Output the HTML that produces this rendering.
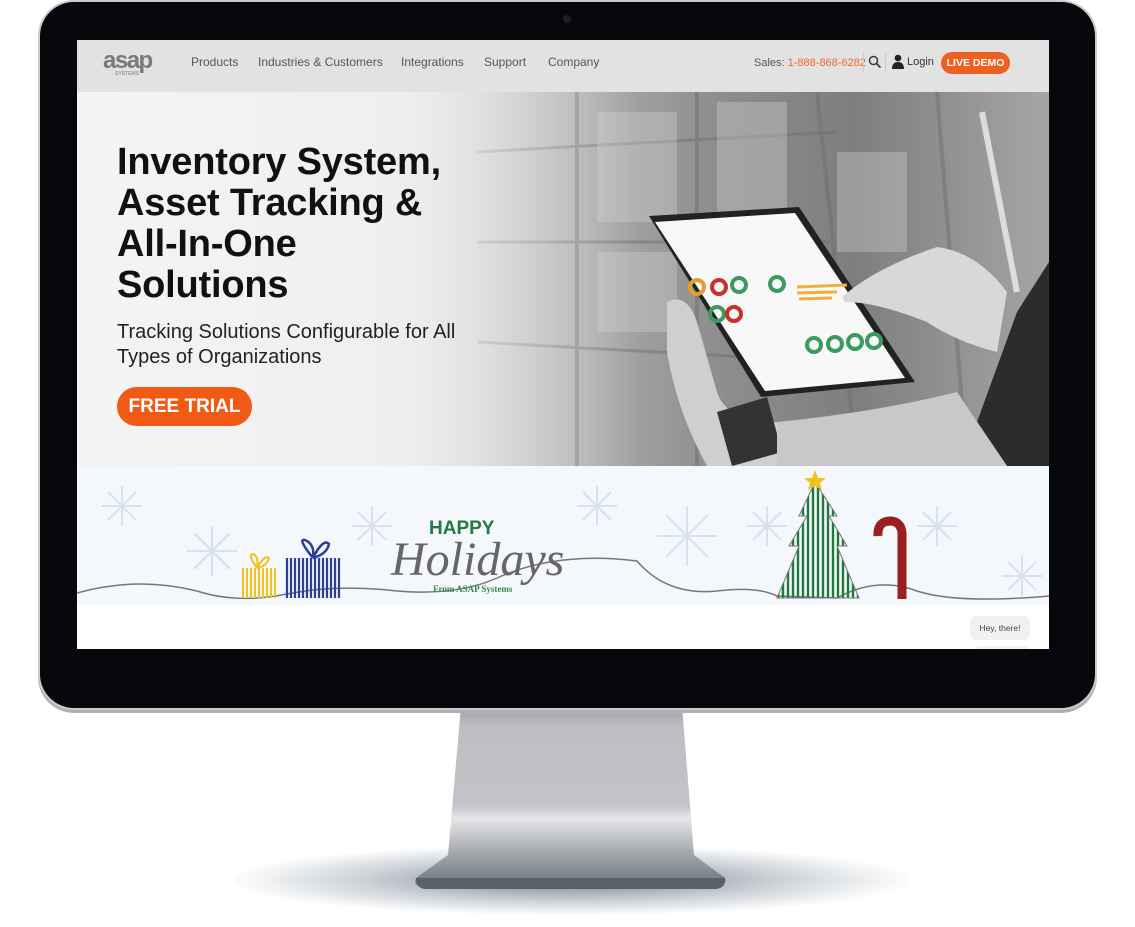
<!DOCTYPE html>
<html><head><meta charset="utf-8"><style>
*{margin:0;padding:0;box-sizing:border-box}
html,body{width:1135px;height:927px;overflow:hidden}
body{background:#fff;position:relative;font-family:"Liberation Sans",sans-serif}
.abs{position:absolute}
.bezel{left:40px;top:2px;width:1055px;height:706px;background:#07080b;border-radius:34px;box-shadow:0 0 0 2px #c9cbce,0 3px 0 2px #aeb0b3}
.screen{left:77px;top:40px;width:972px;height:609px;background:#fff;overflow:hidden}
.nav{left:0;top:0;width:972px;height:52px;background:#e2e2e2}
.nav a{position:absolute;top:15px;font-size:12px;color:#555}
.hero{left:0;top:52px;width:972px;height:374px;background:linear-gradient(90deg,#f3f3f3 0%,#e8e8e8 30%,#bdbdbd 45%,#8f8f8f 65%,#7e7e7e 80%,#a5a5a5 100%);overflow:hidden}
h1{position:absolute;left:40px;top:50px;font-size:38px;line-height:41px;font-weight:bold;color:#111;letter-spacing:-0.2px}
.sub{position:absolute;left:40px;top:228px;font-size:20px;line-height:25px;color:#222}
.ft{position:absolute;left:40px;top:295px;width:135px;height:39px;border-radius:20px;background:#f05a14;color:#fff;font-weight:bold;font-size:19px;text-align:center;line-height:39px}
.banner{left:0;top:426px;width:972px;height:139px;background:#f4f7fb}
</style></head><body>
<div class="abs" style="left:230px;top:845px;width:680px;height:70px;border-radius:50%;background:radial-gradient(ellipse at center,rgba(70,85,105,.75) 0%,rgba(120,135,150,.35) 45%,rgba(255,255,255,0) 72%)"></div>
<svg class="abs" style="left:0;top:0" width="1135" height="927">
<defs><linearGradient id="st" x1="0" y1="0" x2="0" y2="1"><stop offset="0" stop-color="#9ea0a4"/><stop offset=".12" stop-color="#bdbec2"/><stop offset=".55" stop-color="#c3c4c8"/><stop offset=".62" stop-color="#e6e7e9"/><stop offset=".8" stop-color="#a8abb0"/><stop offset="1" stop-color="#687480"/></linearGradient></defs>
<path d="M461 706 L682 706 L694 855 L725 878 Q727 885 718 887 L422 887 Q413 885 416 878 L448 855 Z" fill="url(#st)"/>
<path d="M416 878 Q416 888 425 889 L716 889 Q726 888 725 878" fill="#59616b"/>
</svg>
<div class="abs bezel"></div>
<div class="abs" style="left:563px;top:15px;width:8px;height:8px;border-radius:50%;background:#1c1f24"></div>
<div class="abs screen">
 <div class="abs nav">
  <div class="abs" style="left:26px;top:9px;font-size:24px;font-weight:bold;color:#7a7a7a;letter-spacing:-1.5px;line-height:24px">asap</div>
  <div class="abs" style="left:38px;top:31px;font-size:5px;color:#777">SYSTEMS</div>
  <a style="left:114px">Products</a><a style="left:181px">Industries &amp; Customers</a><a style="left:324px">Integrations</a><a style="left:407px">Support</a><a style="left:471px">Company</a>
  <div class="abs" style="left:677px;top:17px;font-size:11px;color:#555">Sales: <span style="color:#ee6a25">1-888-868-6282</span></div>
  <div class="abs" style="left:786px;top:12px;width:1px;height:20px;background:#ccc"></div>
  <svg class="abs" style="left:791px;top:15px" width="14" height="14"><circle cx="5.5" cy="5.5" r="4" fill="none" stroke="#333" stroke-width="1.4"/><path d="M8.5 8.5 L12.5 12.5" stroke="#333" stroke-width="1.6"/></svg>
  <div class="abs" style="left:808px;top:12px;width:1px;height:20px;background:#ccc"></div>
  <svg class="abs" style="left:815px;top:14px" width="12" height="16"><circle cx="6" cy="4" r="3.3" fill="#222"/><path d="M0 15 Q0 8 6 8 Q12 8 12 15 Z" fill="#222"/></svg>
  <div class="abs" style="left:830px;top:16px;font-size:11px;color:#333">Login</div>
  <div class="abs" style="left:864px;top:12px;width:69px;height:22px;border-radius:11px;background:#ee6020;color:#fff;font-size:10.5px;font-weight:bold;text-align:center;line-height:22px">LIVE DEMO</div>
 </div>
 <div class="abs hero">
  <svg class="abs" style="left:0;top:0" width="972" height="374">
   <g stroke="#6f6f6f" stroke-width="4" opacity=".5">
    <path d="M500 0 L500 374 M620 0 L620 374 M740 0 L780 374 M860 0 L890 374"/>
    <path d="M400 60 L760 40 M400 150 L760 150 M400 250 L760 270" stroke-width="3"/>
   </g>
   <g fill="#d4d4d4" opacity=".35"><rect x="520" y="20" width="80" height="110"/><rect x="640" y="10" width="70" height="120"/><rect x="520" y="160" width="80" height="80"/><rect x="760" y="60" width="70" height="100"/></g>
   <path d="M905 20 L940 200" stroke="#eee" stroke-width="6" opacity=".8"/>
   <path d="M972 170 L940 220 L900 330 L930 374 L972 374 Z" fill="#2c2c2c"/>
   <path d="M572 124 L722 115 L838 290 L684 305 Z" fill="#222"/>
   <path d="M578 130 L718 121 L828 286 L688 299 Z" fill="#f8f8f8"/>
   <g fill="none" stroke-width="4">
    <circle cx="620" cy="195" r="7" stroke="#e0a030"/><circle cx="642" cy="195" r="7" stroke="#c8302a"/><circle cx="662" cy="193" r="7" stroke="#3a9a60"/>
    <circle cx="700" cy="192" r="7" stroke="#3a9a60"/><circle cx="640" cy="222" r="7" stroke="#3a9a60"/><circle cx="657" cy="222" r="7" stroke="#c8302a"/>
    <circle cx="737" cy="253" r="7" stroke="#3a9a60"/><circle cx="758" cy="252" r="7" stroke="#3a9a60"/><circle cx="778" cy="250" r="7" stroke="#3a9a60"/><circle cx="797" cy="249" r="7" stroke="#3a9a60"/>
   </g>
   <path d="M720 195 L770 193 M720 201 L760 200 M722 207 L755 206" stroke="#f0b040" stroke-width="3"/>
   <path d="M765 205 Q800 175 860 155 Q900 160 930 200 L920 260 Q880 250 850 230 Q800 210 768 210 Z" fill="#d8d8d8"/>
   <path d="M590 210 Q610 200 620 230 L640 300 Q650 330 700 330 L720 374 L630 374 Q600 320 590 260 Z" fill="#cfcfcf"/>
   <path d="M640 320 L690 305 L705 360 L655 374 Z" fill="#333"/>
   <path d="M700 330 Q800 320 880 300 L930 374 L700 374 Z" fill="#c8c8c8"/>
  </svg>
  <div class="abs" style="left:0;top:0;width:560px;height:374px;background:linear-gradient(90deg,rgba(244,244,244,.95) 0%,rgba(240,240,240,.85) 60%,rgba(230,230,230,0) 100%)"></div>
  <h1>Inventory System,<br>Asset Tracking &amp;<br>All-In-One<br>Solutions</h1>
  <div class="sub">Tracking Solutions Configurable for All<br>Types of Organizations</div>
  <div class="ft">FREE TRIAL</div>
 </div>
 <div class="abs banner">
  <svg class="abs" style="left:0;top:0" width="972" height="139">
   <g fill="none" stroke="#d6e2f0" stroke-width="2">
    <path d="M45 20 L45 60 M25 40 L65 40 M31 26 L59 54 M59 26 L31 54"/>
    <path d="M135 60 L135 110 M110 85 L160 85 M117 67 L153 103 M153 67 L117 103"/>
    <path d="M295 40 L295 80 M275 60 L315 60 M281 46 L309 74 M309 46 L281 74"/>
    <path d="M520 20 L520 60 M500 40 L540 40 M506 26 L534 54 M534 26 L506 54"/>
    <path d="M610 40 L610 100 M580 70 L640 70 M589 49 L631 91 M631 49 L589 91"/>
    <path d="M690 40 L690 80 M670 60 L710 60 M676 46 L704 74 M704 46 L676 74"/>
    <path d="M860 40 L860 80 M840 60 L880 60 M846 46 L874 74 M874 46 L846 74"/>
    <path d="M945 90 L945 130 M925 110 L965 110 M931 96 L959 124 M959 96 L931 124"/>
   </g>
   <path d="M0 127 Q60 110 120 125 Q160 138 210 128 Q260 118 320 125 Q380 130 420 112 Q480 85 560 95 Q590 130 640 125 Q680 120 700 130 L760 132 Q800 110 840 125 Q880 138 972 130" fill="none" stroke="#777" stroke-width="1.5"/>
   <g stroke="#f2c21c" stroke-width="2"><path d="M166 102 L166 132 M170 102 L170 132 M174 102 L174 132 M178 102 L178 132 M182 102 L182 132 M186 102 L186 132 M190 102 L190 132 M194 102 L194 132 M198 102 L198 132"/></g>
   <path d="M180 102 Q170 88 176 88 Q182 90 180 102 Q188 88 192 92 Q190 100 180 102" fill="none" stroke="#f2c21c" stroke-width="2"/>
   <g stroke="#2c3f98" stroke-width="2.2"><path d="M210 92 L210 132 M214 92 L214 132 M218 92 L218 132 M222 92 L222 132 M226 92 L226 132 M230 92 L230 132 M234 92 L234 132 M238 92 L238 132 M242 92 L242 132 M246 92 L246 132 M250 92 L250 132 M254 92 L254 132 M258 92 L258 132 M262 92 L262 132"/></g>
   <path d="M236 92 Q220 72 228 74 Q238 78 236 92 Q246 72 252 78 Q250 88 236 92" fill="none" stroke="#2c3f98" stroke-width="2.5"/>
   <clipPath id="tr"><path d="M738 16 L722 50 L730 50 L712 80 L722 80 L700 132 L782 132 L760 80 L770 80 L752 50 L760 50 Z"/></clipPath>
   <g stroke="#1f7a3a" stroke-width="2.4" clip-path="url(#tr)"><path d="M701 10 V140 M706 10 V140 M711 10 V140 M716 10 V140 M721 10 V140 M726 10 V140 M731 10 V140 M736 10 V140 M741 10 V140 M746 10 V140 M751 10 V140 M756 10 V140 M761 10 V140 M766 10 V140 M771 10 V140 M776 10 V140 M781 10 V140"/></g>
   <path d="M738 16 L722 50 L730 50 L712 80 L722 80 L700 132 L782 132 L760 80 L770 80 L752 50 L760 50 Z" fill="none" stroke="#777" stroke-width="1"/>
   <path d="M738 4 L741 12 L749 12 L743 17 L745 24 L738 20 L731 24 L733 17 L727 12 L735 12 Z" fill="#f2c21c"/>
   <path d="M801 70 Q800 55 814 55 Q826 56 825 72 L825 133" fill="none" stroke="#9a1f22" stroke-width="9"/>
  </svg>
  <div class="abs" style="left:352px;top:52px;font-size:19px;font-weight:bold;color:#237a3a">HAPPY</div>
  <div class="abs" style="left:314px;top:66px;font-size:48px;font-style:italic;color:#666;font-family:'Liberation Serif',serif">Holidays</div>
  <div class="abs" style="left:356px;top:118px;font-size:9px;color:#3a8a4a;font-family:'Liberation Serif',serif;font-weight:bold">From ASAP Systems</div>
 </div>
 <div class="abs" style="left:893px;top:576px;width:60px;height:24px;border-radius:6px;background:#f1f1f1;font-size:8.5px;color:#444;line-height:24px;text-align:center">Hey, there!</div>
 <div class="abs" style="left:897px;top:606px;width:56px;height:12px;border-radius:6px;background:#f1f1f1"></div>
</div>
</body></html>
